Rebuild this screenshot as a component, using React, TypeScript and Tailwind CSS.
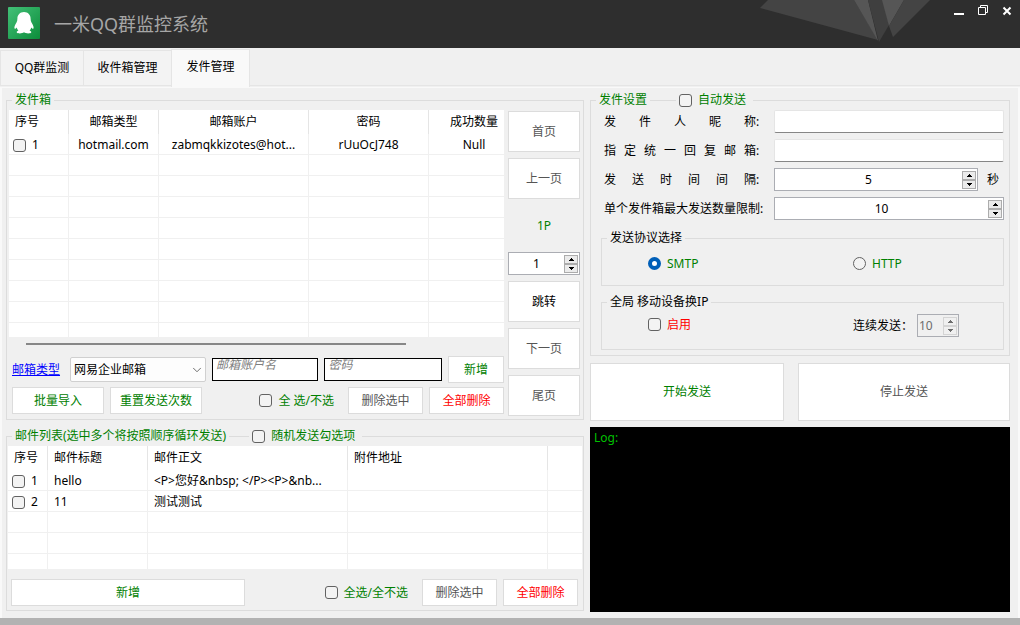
import React, { useState } from "react";
import { ChevronDown } from "lucide-react";
import clsx from "clsx";

const GREEN = "text-[#008000]";
const GREY = "text-[#555555]";
const RED = "text-[#ff0000]";

type ButtonProps = {
  children: React.ReactNode;
  className?: string;
};

const Button = ({ children, className }: ButtonProps) => (
  <button
    type="button"
    className={clsx(
      "shrink-0 border border-[#dcdcdc] bg-white text-center hover:bg-[#f5faff]",
      className
    )}
  >
    {children}
  </button>
);

type CheckProps = {
  label?: string;
  name?: string;
  type?: "checkbox" | "radio";
  className?: string;
  defaultChecked?: boolean;
};

const Check = ({
  label,
  name,
  type = "checkbox",
  className,
  defaultChecked,
}: CheckProps) => (
  <label className={clsx("flex items-center gap-1.5", className)}>
    <input
      type={type}
      name={name}
      aria-label={label ? undefined : "选择"}
      defaultChecked={defaultChecked}
      className={clsx(
        "size-[13px] shrink-0 appearance-none border border-[#626262] bg-[#f3f3f3]",
        type === "radio"
          ? "rounded-full checked:border-4 checked:border-[#005fb8] checked:bg-white"
          : "rounded-[3px] checked:border-[#005fb8] checked:bg-[#005fb8]"
      )}
    />
    {label && <span>{label}</span>}
  </label>
);

type SpinProps = {
  id: string;
  label: string;
  initial: number;
  className?: string;
  inputClass?: string;
  disabled?: boolean;
};

const Spin = ({
  id,
  label,
  initial,
  className,
  inputClass = "text-center",
  disabled,
}: SpinProps) => {
  const [value, setValue] = useState(initial);
  const arrow = clsx(
    "flex h-[9px] w-[14px] items-center justify-center border",
    disabled
      ? "border-[#d4d4d4] bg-[#f0f0f0] text-[#6d6d6d]"
      : "border-[#acacac] bg-[#ebebeb] text-black"
  );

  return (
    <div
      className={clsx(
        "flex h-[23px] min-w-0 items-center border border-[#abadb3] pr-px",
        disabled ? "bg-[#f0f0f0] text-[#6d6d6d]" : "bg-white",
        className
      )}
    >
      <input
        id={id}
        type="number"
        aria-label={label}
        value={value}
        disabled={disabled}
        onChange={(e) => setValue(Number(e.target.value))}
        className={clsx(
          "h-5 w-0 min-w-0 flex-1 appearance-none bg-transparent leading-5 outline-none [-moz-appearance:textfield] [&::-webkit-inner-spin-button]:appearance-none",
          inputClass
        )}
      />
      <div className="flex flex-col">
        <button
          type="button"
          aria-label="增加"
          disabled={disabled}
          className={arrow}
          onClick={() => setValue(value + 1)}
        >
          <svg className="h-[3px] w-[5px]" viewBox="0 0 5 3" fill="currentColor">
            <path d="M2 0h1v1h1v1h1v1H0V2h1V1h1z" />
          </svg>
        </button>
        <button
          type="button"
          aria-label="减少"
          disabled={disabled}
          className={arrow}
          onClick={() => setValue(value - 1)}
        >
          <svg className="h-[3px] w-[5px]" viewBox="0 0 5 3" fill="currentColor">
            <path d="M0 0h5v1H4v1H3v1H2V2H1V1H0z" />
          </svg>
        </button>
      </div>
    </div>
  );
};

type GroupProps = {
  title: string;
  titleClass?: string;
  extra?: string;
  lineClass?: string;
  className?: string;
  children: React.ReactNode;
};

const Group = ({
  title,
  titleClass,
  extra,
  lineClass,
  className,
  children,
}: GroupProps) => (
  <fieldset className="min-w-0 border border-[#dcdcdc]">
    <legend
      className={clsx("ml-[5px] flex h-4 items-center px-[3px]", titleClass)}
    >
      {title}
      {extra && (
        <>
          <span className={clsx("mx-[3px] h-px bg-[#dcdcdc]", lineClass)} />
          <Check label={extra} className="pr-1" />
        </>
      )}
    </legend>
    <div className={className}>{children}</div>
  </fieldset>
);

const th = "h-6 border-r border-[#e5e5e5] p-0 font-normal last:border-r-0";
const td =
  "h-[21px] truncate border-r border-b border-[#f0f0f0] p-0 pt-0.5 last:border-r-0";

const Accounts = () => {
  const cells = ["hotmail.com", "zabmqkkizotes@hot...", "rUuOcJ748", "Null"];

  return (
    <div className="h-[227px] overflow-hidden bg-white">
      <table className="w-full min-w-[510px] table-fixed border-separate border-spacing-0 text-center">
        <colgroup>
          <col className="w-[60px]" />
          <col className="w-[90px]" />
          <col className="w-[150px]" />
          <col className="w-[120px]" />
          <col />
        </colgroup>
        <thead>
          <tr>
            <th className={clsx(th, "text-left")}>
              <span className="pl-1.5">序号</span>
            </th>
            {["邮箱类型", "邮箱账户", "密码", "成功数量"].map((name) => (
              <th key={name} className={th}>
                {name}
              </th>
            ))}
          </tr>
        </thead>
        <tbody>
          <tr>
            <td className={td}>
              <Check label="1" className="pl-1" />
            </td>
            {cells.map((cell) => (
              <td key={cell} className={td}>
                {cell}
              </td>
            ))}
          </tr>
          {Array.from({ length: 9 }, (_, i) => (
            <tr key={i}>
              {Array.from({ length: 5 }, (_, j) => (
                <td key={j} className={td} />
              ))}
            </tr>
          ))}
        </tbody>
      </table>
    </div>
  );
};

const Mails = () => {
  const mails = [
    { id: "1", title: "hello", body: "<P>您好&nbsp; </P><P>&nb..." },
    { id: "2", title: "11", body: "测试测试" },
  ];

  return (
    <div className="h-[123px] overflow-hidden bg-white">
      <table className="w-full table-fixed border-separate border-spacing-0 text-left">
        <colgroup>
          <col className="w-10" />
          <col className="w-[100px]" />
          <col className="w-[200px]" />
          <col className="w-[200px]" />
          <col />
        </colgroup>
        <thead>
          <tr>
            {["序号", "邮件标题", "邮件正文", "附件地址", ""].map((name) => (
              <th key={name} className={th}>
                <span className="pl-1.5">{name}</span>
              </th>
            ))}
          </tr>
        </thead>
        <tbody>
          {mails.map((mail) => (
            <tr key={mail.id}>
              <td className={td}>
                <Check label={mail.id} className="pl-1" />
              </td>
              <td className={td}>
                <span className="pl-1.5">{mail.title}</span>
              </td>
              <td className={td}>
                <span className="pl-1.5">{mail.body}</span>
              </td>
              <td className={td} />
              <td className={td} />
            </tr>
          ))}
          {Array.from({ length: 3 }, (_, i) => (
            <tr key={i}>
              {Array.from({ length: 5 }, (_, j) => (
                <td key={j} className={td} />
              ))}
            </tr>
          ))}
        </tbody>
      </table>
    </div>
  );
};

const Header = () => (
  <header className="flex h-12 items-start bg-[#2e2e2e] pr-1 pl-2">
    <svg className="mt-[7px] size-8 shrink-0" viewBox="0 0 32 32">
      <defs>
        <linearGradient id="logo" x1="0" y1="0" x2="1" y2="1">
          <stop offset="0" stopColor="#43c178" />
          <stop offset="1" stopColor="#0c8c3a" />
        </linearGradient>
      </defs>
      <rect width="32" height="32" rx="1" fill="url(#logo)" />
      <path
        fill="#fff"
        d="M16 5c-4 0-6.600 2.800-6.600 6.800 0 1.500-.3 2.600-.9 3.700-1.300 2-2.200 4-2.100 5.600.1 1.200 1.300.7 2.300-.6.3 1.200.9 2.200 1.700 3-1.300.5-2 1.200-1.600 2 .7 1.200 5.400 1.200 7.200-.2 1.800 1.400 6.500 1.400 7.200.2.400-.8-.3-1.500-1.600-2 .8-.8 1.400-1.800 1.700-3 1 1.300 2.200 1.800 2.300.6.1-1.600-.8-3.600-2.100-5.600-.6-1.100-.9-2.200-.9-3.700C22.600 7.800 20 5 16 5z"
      />
    </svg>
    <h1 className="ml-3.5 flex-1 pt-2.5 text-[18px] leading-7 text-[#a6a6a6]">
      一米QQ群监控系统
    </h1>
    <svg className="h-12 w-[172px] shrink-0" viewBox="0 0 172 48">
      <path fill="#444444" d="M8 0h86l24 40L0 8z" />
      <path fill="#565656" d="M94 0h14l10 41z" />
      <path fill="#3f3f3f" d="M108 0h15l6 25-10 17z" />
      <path fill="#565656" d="M122 0h22l-15 26z" />
      <path fill="#444444" d="M144 0h26l-37 37-4-11z" />
    </svg>
    <div className="ml-[18px] flex text-white">
      <button type="button" aria-label="最小化" className="h-6 w-[18px]">
        <svg className="size-[18px]" viewBox="0 0 18 18" fill="currentColor">
          <path d="M4 10h10v2H4z" />
        </svg>
      </button>
      <button type="button" aria-label="还原" className="ml-1.5 h-6 w-[18px]">
        <svg
          className="size-[18px]"
          viewBox="0 0 18 18"
          fill="none"
          stroke="currentColor"
        >
          <path d="M4.500 4.500h7v7h-7zM6.500 4.500v-2h7v7h-2" />
        </svg>
      </button>
      <button type="button" aria-label="关闭" className="ml-1.5 h-6 w-[18px]">
        <svg
          className="size-[18px]"
          viewBox="0 0 18 18"
          stroke="currentColor"
          strokeWidth="2"
        >
          <path d="M5.500 4.500l7 7M12.500 4.500l-7 7" />
        </svg>
      </button>
    </div>
  </header>
);

const Tabs = () => (
  <nav role="tablist" className="flex h-[39px] items-end">
    <button
      type="button"
      role="tab"
      aria-selected="false"
      className="mb-px h-9 w-[84px] border border-[#e5e5e5] bg-[#f3f3f3]"
    >
      QQ群监测
    </button>
    <button
      type="button"
      role="tab"
      aria-selected="false"
      className="mb-px h-9 w-[87px] border-y border-[#e5e5e5] bg-[#f3f3f3]"
    >
      收件箱管理
    </button>
    <button
      type="button"
      role="tab"
      aria-selected="true"
      className="h-[38px] w-[79px] border-x border-t border-[#e5e5e5] bg-[#f9f9f9] pb-1"
    >
      发件管理
    </button>
    <div className="mb-px flex-1 border-b border-[#e5e5e5]" />
  </nav>
);

const Pager = () => (
  <div className="flex w-[72px] shrink-0 flex-col gap-1.5 pt-[3px]">
    <Button className={clsx("h-[41px]", GREY)}>首页</Button>
    <Button className={clsx("h-[41px]", GREY)}>上一页</Button>
    <div className={clsx("h-[41px] text-center leading-[41px]", GREEN)}>1P</div>
    <Spin id="page" label="页码" initial={1} />
    <Button className="h-[41px]">跳转</Button>
    <Button className={clsx("h-[41px]", GREY)}>下一页</Button>
    <Button className={clsx("h-[41px]", GREY)}>尾页</Button>
  </div>
);

const Outbox = () => {
  const field =
    "h-[23px] w-0 min-w-0 border border-black bg-white px-[3px] pb-2.5 outline-none placeholder:text-[#808080] placeholder:italic";

  return (
    <Group
      title="发件箱"
      titleClass={GREEN}
      className="flex gap-1 pr-[3px] pl-0.5"
    >
      <div className="min-w-0 flex-1 pt-0.5 pb-[5px]">
        <Accounts />
        <div className="mt-1.5 mr-[98px] ml-[17px] h-0.5 bg-[#878787]" />
        <div className="mt-[11px] flex h-[27px] items-center gap-1.5 pl-[3px]">
          <a href="#type" className="w-[52px] text-[#0000ff] underline">
            邮箱类型
          </a>
          <div className="relative w-[136px] shrink-0">
            <select
              aria-label="邮箱类型"
              className="block h-[25px] w-full appearance-none rounded-[2px] border border-[#d0d0d0] bg-[#fdfdfd] px-[3px]"
            >
              <option>网易企业邮箱</option>
            </select>
            <ChevronDown
              className="pointer-events-none absolute top-1.5 right-0.5 size-3.5 text-[#5a5a5a]"
              strokeWidth={1.5}
            />
          </div>
          <input
            aria-label="邮箱账户名"
            placeholder="邮箱账户名"
            className={clsx(field, "flex-[106]")}
          />
          <input
            type="password"
            aria-label="密码"
            placeholder="密码"
            className={clsx(field, "flex-[118]")}
          />
          <Button className={clsx("h-[27px] w-14", GREEN)}>新增</Button>
        </div>
        <div className="mt-1 flex h-[27px] items-center gap-1.5 pl-[3px]">
          <Button className={clsx("h-[27px] w-[92px]", GREEN)}>批量导入</Button>
          <Button className={clsx("h-[27px] w-[92px]", GREEN)}>
            重置发送次数
          </Button>
          <Check label="全 选/不选" className={clsx("mr-2 ml-auto", GREEN)} />
          <Button className={clsx("h-[27px] w-[75px]", GREY)}>删除选中</Button>
          <Button className={clsx("h-[27px] w-[75px]", RED)}>全部删除</Button>
        </div>
      </div>
      <Pager />
    </Group>
  );
};

const MailList = () => (
  <Group
    title="邮件列表(选中多个将按照顺序循环发送)"
    titleClass={GREEN}
    extra="随机发送勾选项"
    lineClass="w-5"
    className="px-px pt-0.5 pb-1"
  >
    <Mails />
    <div className="mt-2.5 flex h-[27px] items-center gap-1.5 pr-1 pl-[3px]">
      <Button className={clsx("h-[27px] w-[234px] border-[#d0d0d0]", GREEN)}>
        新增
      </Button>
      <Check label="全选/全不选" className={clsx("mr-2 ml-auto", GREEN)} />
      <Button className={clsx("h-[27px] w-[75px]", GREY)}>删除选中</Button>
      <Button className={clsx("h-[27px] w-[75px]", RED)}>全部删除</Button>
    </div>
  </Group>
);

const Row = ({
  id,
  label,
  children,
}: {
  id: string;
  label: string;
  children: React.ReactNode;
}) => (
  <div className="flex h-[23px] items-center pl-[3px]">
    <label htmlFor={id} className="flex w-[170px] shrink-0">
      <span className="min-w-[152px] whitespace-nowrap [text-align-last:justify]">
        {label}
      </span>
      <span>:</span>
    </label>
    {children}
  </div>
);

const Settings = () => {
  const field =
    "h-[23px] w-0 min-w-0 flex-1 rounded-[2px] border border-[#e5e5e5] border-b-[#868686] bg-white px-1 outline-none";

  return (
    <Group
      title="发件设置"
      titleClass={GREEN}
      extra="自动发送"
      lineClass="w-[26px]"
      className="pt-0.5 pr-[5px] pb-[5px] pl-2.5"
    >
      <div className="flex flex-col gap-1.5">
        <Row id="nick" label="发件人昵称">
          <input id="nick" className={field} />
        </Row>
        <Row id="reply" label="指定统一回复邮箱">
          <input id="reply" className={field} />
        </Row>
        <Row id="interval" label="发送时间间隔">
          <Spin
            id="interval"
            label="发送时间间隔"
            initial={5}
            className="flex-1"
          />
          <span className="w-[26px] pl-[9px]">秒</span>
        </Row>
        <Row id="limit" label="单个发件箱最大发送数量限制">
          <Spin
            id="limit"
            label="单个发件箱最大发送数量限制"
            initial={10}
            className="flex-1"
          />
        </Row>
      </div>
      <div className="mt-2.5 flex flex-col gap-2">
        <Group
          title="发送协议选择"
          className={clsx(
            "grid h-[39px] grid-cols-[205fr_150fr] pt-1.5 pl-[46px]",
            GREEN
          )}
        >
          <Check
            type="radio"
            name="protocol"
            label="SMTP"
            defaultChecked
            className="h-[23px]"
          />
          <Check
            type="radio"
            name="protocol"
            label="HTTP"
            className="h-[23px]"
          />
        </Group>
        <Group
          title="全局 移动设备换IP"
          className="grid h-[39px] grid-cols-[205fr_150fr] pt-1 pl-[46px]"
        >
          <Check label="启用" className={clsx("h-[21px]", RED)} />
          <div className="flex h-[23px] items-center">
            <label htmlFor="batch" className="w-16 shrink-0">
              连续发送：
            </label>
            <Spin
              id="batch"
              label="连续发送"
              initial={10}
              className="w-[42px]"
              inputClass="pl-px"
              disabled
            />
          </div>
        </Group>
      </div>
    </Group>
  );
};

const App = () => {
  return (
    <div className="flex min-h-screen flex-col bg-[#f0f0f0] font-['Noto_Sans','Noto_Sans_CJK_SC',sans-serif] text-[12px] leading-4 text-black">
      <Header />
      <Tabs />
      <main className="grid flex-1 grid-cols-[578fr_420fr] gap-1.5 border-x-2 border-t border-[#f9f9f9] pt-1 pr-2 pb-1.5 pl-1">
        <div className="flex min-w-0 flex-col gap-2">
          <Outbox />
          <MailList />
        </div>
        <div className="flex min-w-0 flex-col">
          <Settings />
          <div className="mt-[7px] grid grid-cols-[194fr_212fr] gap-3.5">
            <Button className={clsx("h-[58px]", GREEN)}>开始发送</Button>
            <Button className={clsx("h-[58px]", GREY)}>停止发送</Button>
          </div>
          <textarea
            readOnly
            aria-label="日志"
            defaultValue="Log:"
            className="mt-1.5 min-h-[120px] flex-1 resize-none bg-black px-1 py-[3px] text-[#00c000] outline-none"
          />
        </div>
      </main>
      <footer className="h-[7px] bg-[#b2b2b2]" />
    </div>
  );
};

export default App;
